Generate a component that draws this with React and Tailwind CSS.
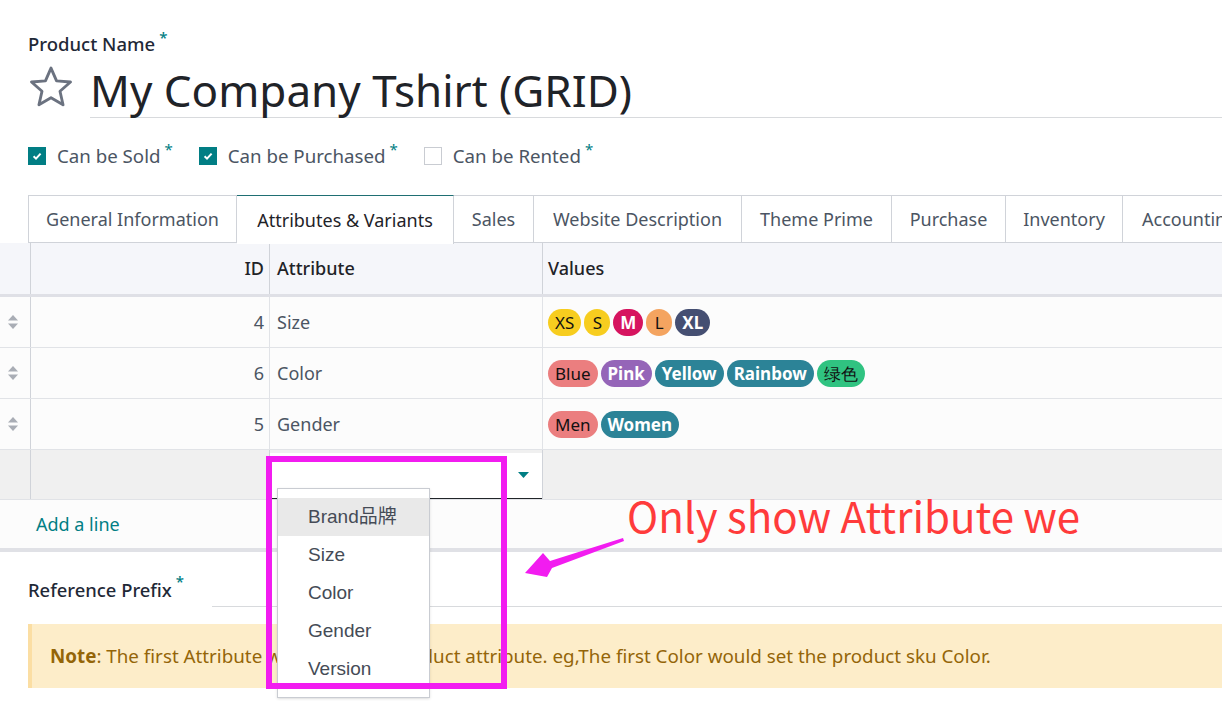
import React from 'react';

const TEAL = '#017e84';

const Req = () => (
  <span className="text-[#017e84] text-[15px] leading-none ml-[4px] self-start mt-[-2px]">*</span>
);

const Checkbox = ({ checked }) =>
  checked ? (
    <span className="w-[18px] h-[18px] bg-[#017e84] flex items-center justify-center shrink-0">
      <svg width="12" height="12" viewBox="0 0 12 12">
        <path d="M2.6 6.3 L5 8.6 L9.6 3.6" stroke="white" strokeWidth="2" fill="none" />
      </svg>
    </span>
  ) : (
    <span className="w-[18px] h-[18px] border border-[#c9ccd2] bg-white shrink-0" />
  );

const Handle = () => (
  <svg width="12" height="16" viewBox="0 0 12 16">
    <path d="M6 1 L11 6.5 L1 6.5 Z" fill="#a9adb5" />
    <path d="M6 15 L11 9.5 L1 9.5 Z" fill="#a9adb5" />
  </svg>
);

const Pill = ({ label, bg, dark }) => (
  <span
    className={`h-[27px] min-w-[26px] px-[7px] rounded-full flex items-center justify-center text-[17px] leading-none ${
      dark ? 'text-white font-bold' : 'text-[#111] font-normal'
    } ${bg}`}
  >
    {label}
  </span>
);

const rows = [
  {
    id: 4,
    name: 'Size',
    values: [
      { label: 'XS', bg: 'bg-[#f7cd1f]' },
      { label: 'S', bg: 'bg-[#f7cd1f]' },
      { label: 'M', bg: 'bg-[#d6145f]', dark: true },
      { label: 'L', bg: 'bg-[#f4a460]' },
      { label: 'XL', bg: 'bg-[#454f72]', dark: true },
    ],
  },
  {
    id: 6,
    name: 'Color',
    values: [
      { label: 'Blue', bg: 'bg-[#eb7e7f]' },
      { label: 'Pink', bg: 'bg-[#9565b8]', dark: true },
      { label: 'Yellow', bg: 'bg-[#2c8397]', dark: true },
      { label: 'Rainbow', bg: 'bg-[#2c8397]', dark: true },
      { label: '绿色', bg: 'bg-[#30c381]' },
    ],
  },
  {
    id: 5,
    name: 'Gender',
    values: [
      { label: 'Men', bg: 'bg-[#eb7e7f]' },
      { label: 'Women', bg: 'bg-[#2c8397]', dark: true },
    ],
  },
];

const tabs = [
  { label: 'General Information', w: 'w-[209px]' },
  { label: 'Attributes & Variants', w: 'w-[217px]', active: true },
  { label: 'Sales', w: 'w-[80px]' },
  { label: 'Website Description', w: 'w-[208px]' },
  { label: 'Theme Prime', w: 'w-[150px]' },
  { label: 'Purchase', w: 'w-[114px]' },
  { label: 'Inventory', w: 'w-[117px]' },
  { label: 'Accounting', w: 'px-[19px]' },
];

const options = ['Brand品牌', 'Size', 'Color', 'Gender', 'Version'];

export default function App() {
  return (
    <div className="relative w-[1222px] h-[701px] overflow-hidden bg-white font-['Noto_Sans',sans-serif] text-[#374151]">
      {/* header fields */}
      <div className="pl-[28px] pt-[32px]">
        <div className="flex h-[24px] items-center text-[18.5px] font-medium text-[#1f2937]">
          Product Name
          <Req />
        </div>
        <div className="flex items-center mt-[6px] h-[56px]">
          <svg width="46" height="44" viewBox="0 0 24 23" className="shrink-0 mt-[-6px]">
            <path
              d="M12 1.6 L14.9 8.3 L22.2 8.9 L16.7 13.7 L18.3 20.8 L12 17.1 L5.7 20.8 L7.3 13.7 L1.8 8.9 L9.1 8.3 Z"
              fill="none"
              stroke="#6b7280"
              strokeWidth="1.5"
              strokeLinejoin="round"
            />
          </svg>
          <div className="ml-[16px] flex-1 h-[56px] border-b border-[#d8dadd] text-[44px] leading-[56px] text-[#1f2328] whitespace-nowrap">
            My Company Tshirt (GRID)
          </div>
        </div>
        <div className="flex items-center mt-[26px] h-[24px] text-[18.7px] text-[#4b5563]">
          <Checkbox checked />
          <span className="ml-[11px]">Can be Sold</span>
          <Req />
          <span className="w-[26px]" />
          <Checkbox checked />
          <span className="ml-[11px]">Can be Purchased</span>
          <Req />
          <span className="w-[26px]" />
          <Checkbox />
          <span className="ml-[11px]">Can be Rented</span>
          <Req />
        </div>
      </div>

      {/* tabs */}
      <div className="flex ml-[28px] mt-[27px] h-[48px] border-b border-[#d0d3d9] w-[1300px]">
        {tabs.map((t, i) => (
          <div
            key={i}
            className={`${t.w} shrink-0 h-[48px] flex items-center justify-center text-[18px] whitespace-nowrap border-t border-r ${
              i === 0 ? 'border-l' : ''
            } ${
              t.active
                ? 'border-t-[#1f6f73] border-r-[#d0d3d9] bg-white text-[#1f2328] h-[49px] z-10'
                : 'border-[#d0d3d9] text-[#4b5563]'
            }`}
          >
            {t.label}
          </div>
        ))}
      </div>

      {/* table */}
      <div className="w-[1222px]">
        <div className="flex h-[54px] bg-[#f5f6fa] border-b-[3px] border-[#dfe0e6] text-[18px] font-medium text-[#1f2328]">
          <div className="w-[31px] border-r border-[#d0d3d9]" />
          <div className="w-[239px] border-r border-[#d0d3d9] flex items-center justify-end pr-[5px]">ID</div>
          <div className="w-[273px] border-r border-[#d0d3d9] flex items-center pl-[7px]">Attribute</div>
          <div className="flex-1 flex items-center pl-[5px]">Values</div>
        </div>
        {rows.map((r) => (
          <div key={r.id} className="flex h-[51px] bg-[#fcfcfc] border-b border-[#e1e3e7] text-[18px] text-[#4b5563]">
            <div className="w-[31px] border-r border-[#d0d3d9] flex items-center pl-[7px]">
              <Handle />
            </div>
            <div className="w-[239px] border-r border-[#e1e3e7] flex items-center justify-end pr-[5px]">{r.id}</div>
            <div className="w-[273px] border-r border-[#e1e3e7] flex items-center pl-[7px]">{r.name}</div>
            <div className="flex-1 flex items-center pl-[5px] gap-[3px]">
              {r.values.map((v, j) => (
                <Pill key={j} {...v} />
              ))}
            </div>
          </div>
        ))}
        <div className="flex h-[50px] bg-[#f0f0f0] border-b border-[#e1e3e7]">
          <div className="w-[31px] border-r border-[#d0d3d9]" />
          <div className="w-[239px] border-r border-[#d0d3d9]" />
          <div className="w-[273px] border-r border-[#d0d3d9] pt-[3px]">
            <div className="h-full bg-white border-b border-[#212529] flex items-center justify-end pr-[13px]">
              <svg width="11" height="7" viewBox="0 0 11 7">
                <path d="M0 0 L11 0 L5.5 6 Z" fill={TEAL} />
              </svg>
            </div>
          </div>
          <div className="flex-1" />
        </div>
        <div className="h-[52px] bg-[#fcfcfc] border-b-4 border-[#e0e1e6] flex items-center pl-[36px] text-[18px] text-[#017e84]">
          Add a line
        </div>
      </div>

      {/* reference prefix */}
      <div className="flex items-center ml-[28px] mt-[20px] h-[35px]">
        <div className="w-[184px] flex items-center text-[18.4px] font-medium text-[#1f2937]">
          Reference Prefix
          <Req />
        </div>
        <div className="flex-1 h-[35px] border-b border-[#d8dadd]" />
      </div>

      <div className="ml-[28px] mt-[17px] h-[64px] bg-[#fdedc9] border-l-4 border-[#fbdea3] flex items-center pl-[18px] text-[18.8px] text-[#946508] whitespace-nowrap">
        <span className="font-bold">Note</span>: The first Attribute would set the product attribute. eg,The first Color would set the product sku Color.
      </div>

      {/* dropdown overlay */}
      <div className="absolute left-[277px] top-[488px] w-[153px] h-[210px] bg-white border border-[#c9ccd2] shadow-sm pt-[9px] font-['Liberation_Sans',Arial,'Noto_Sans_CJK_SC',sans-serif] text-[19px] text-[#454b56]">
        {options.map((o, i) => (
          <div key={o} className={`h-[38px] flex items-center pl-[30px] ${i === 0 ? 'bg-[#e9e9e9]' : ''}`}>
            {o}
          </div>
        ))}
      </div>

      {/* annotation */}
      <div className="absolute left-[266px] top-[456px] w-[241px] h-[233px] border-[6px] border-[#f21cf0]" />
      <div className="absolute left-[627px] top-[485px] text-[#ff3b3b] text-[42px] leading-[60px] whitespace-nowrap font-['Noto_Sans_CJK_SC',sans-serif]">
        Only show Attribute we
      </div>
      <svg className="absolute left-0 top-0" width="1222" height="701">
        <polygon
          points="623,538 550,561 543,553 525,573 547,577 552,568 624,541"
          fill="#f21cf0"
        />
      </svg>
    </div>
  );
}
